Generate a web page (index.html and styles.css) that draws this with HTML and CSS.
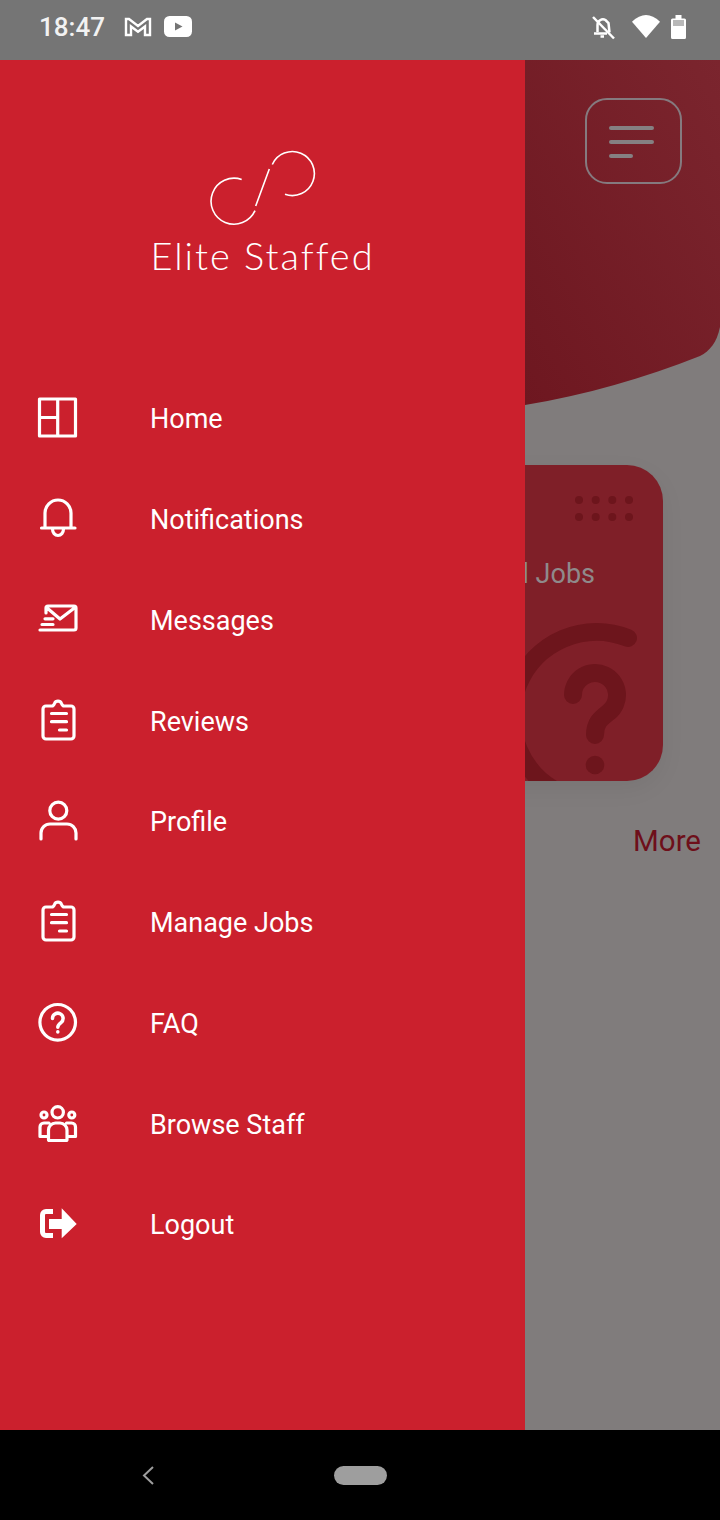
FILE: index.html
```html
<!DOCTYPE html>
<html lang="en">
<head>
    <meta charset="UTF-8">
    <meta name="viewport" content="width=device-width, initial-scale=1.0">
    <title>Elite Staffed</title>
    <link rel="stylesheet" href="styles.css">
</head>
<body>
    <div class="screen">
        <div class="status-bar">
            <span class="clock">18:47</span>
            <svg class="st-gmail" viewBox="0 0 28 20"><path d="M2 2h3l9 7 9-7h3v16h-5V9.500l-7 5.200-7-5.200V18H2z"/></svg>
            <svg class="st-youtube" viewBox="0 0 28 21"><rect width="28" height="21" rx="5.500" fill="#fff"/><path d="M11 6.500l7.500 4-7.500 4z" fill="#757575"/></svg>
            <div class="status-right">
                <svg class="st-bell" viewBox="0 0 24 26"><path d="M6.500 18V11a5.500 5.500 0 0 1 8-5l3 3 1 9.500M3 19.500H16M9.500 22.500h3.500" fill="none" stroke="#fff" stroke-width="2.500"/><path d="M2 3L23 24.500" stroke="#fff" stroke-width="2.500"/></svg>
                <svg class="st-wifi" viewBox="0 0 28 24"><path d="M0 6.700Q14-6.700 28 6.700L14 23z" fill="#fff"/></svg>
                <svg class="st-battery" viewBox="0 0 15 24"><path d="M4.500 0h6v3.500h3a1.500 1.500 0 0 1 1.500 1.500v17.500a1.500 1.500 0 0 1-1.500 1.500h-12a1.500 1.500 0 0 1-1.500-1.500V5a1.500 1.500 0 0 1 1.500-1.500h3z" fill="#fff"/><rect x="2" y="5" width="11" height="6" fill="#b8b8b8"/></svg>
            </div>
        </div>

        <div class="main">
            <nav class="drawer">
                <div class="brand">
                    <svg class="brand-mark" viewBox="0 0 110 80">
                        <path d="M33.700 31.500A23 23 0 1 0 47 62.700M47.700 58L61.300 21M64.300 16.500A22 22 0 1 1 77 46.300"/>
                    </svg>
                    <div class="brand-name">Elite Staffed</div>
                </div>

                <a class="menu-item">
                    <svg class="menu-icon" viewBox="0 0 40 40"><path d="M1.500 1h36v37h-36zM19.700 1v37M1.500 19.500h18.200"/></svg>
                    <span>Home</span>
                </a>
                <a class="menu-item">
                    <svg class="menu-icon" viewBox="0 0 40 40"><path d="M7 29V14a13 13 0 0 1 26 0v15M3.500 29H37M14.500 30a5.500 6.500 0 0 0 11 0"/></svg>
                    <span>Notifications</span>
                </a>
                <a class="menu-item">
                    <svg class="menu-icon" viewBox="0 0 40 40"><path d="M8 13V8a2 2 0 0 1 2-2h26a2 2 0 0 1 2 2v20a2 2 0 0 1-2 2H2M8.500 7.500L22 19 37 7.500M7 18.800h8M4 24.500h11"/></svg>
                    <span>Messages</span>
                </a>
                <a class="menu-item">
                    <svg class="menu-icon" viewBox="0 0 40 40"><use href="#clipboard"/></svg>
                    <span>Reviews</span>
                </a>
                <a class="menu-item">
                    <svg class="menu-icon" viewBox="0 0 40 40"><circle cx="20.300" cy="9.700" r="8.500"/><path d="M3 38v-6a9 9 0 0 1 9-9h17a9 9 0 0 1 9 9v6"/></svg>
                    <span>Profile</span>
                </a>
                <a class="menu-item">
                    <svg class="menu-icon" viewBox="0 0 40 40"><use href="#clipboard"/></svg>
                    <span>Manage Jobs</span>
                </a>
                <a class="menu-item">
                    <svg class="menu-icon" viewBox="0 0 40 40"><circle cx="19.700" cy="19.300" r="17.800"/><path class="faq-mark" d="M14.500 15.500a5.300 5.300 0 1 1 8.500 4.200c-2 1.500-3.200 2.500-3.200 4.500M19.800 28.700v.3"/></svg>
                    <span>FAQ</span>
                </a>
                <a class="menu-item">
                    <svg class="menu-icon" viewBox="0 0 40 40"><circle cx="19.700" cy="8.300" r="5.700"/><circle cx="6" cy="11" r="3"/><circle cx="33.800" cy="11" r="3"/><path d="M10.500 35.500V26a7 7 0 0 1 7-7h4.500a7 7 0 0 1 7 7v9.500a1 1 0 0 1-1 1H11.500a1 1 0 0 1-1-1zM10.500 32.500H2V23a4 4 0 0 1 4-4h5M29 32.500h8.500V23a4 4 0 0 0-4-4h-5"/></svg>
                    <span>Browse Staff</span>
                </a>
                <a class="menu-item">
                    <svg class="menu-icon" viewBox="0 0 40 40"><path class="solid" d="M11 15h12.700V4.300L38.700 20 23.700 34.300V25H11z"/><path class="thick" d="M15 7.500H8a3.500 3.500 0 0 0-3.500 3.500v17A3.500 3.500 0 0 0 8 31.500h7"/></svg>
                    <span>Logout</span>
                </a>
            </nav>

            <div class="backdrop">
                <div class="hero">
                    <svg class="hero-shape" viewBox="0 0 195 345">
                        <defs>
                            <linearGradient id="heroFill" x1="0" y1="1" x2="1" y2="0">
                                <stop offset="0" stop-color="#6e1720"/>
                                <stop offset="1" stop-color="#7b252e"/>
                            </linearGradient>
                        </defs>
                        <path d="M0 0H195V267C192 282 185 291 175 296C120 318 60 335 0 345Z" fill="url(#heroFill)"/>
                    </svg>
                    <div class="menu-btn">
                        <i></i>
                        <i></i>
                        <i class="short"></i>
                    </div>
                </div>

                <div class="card">
                    <svg class="card-art" viewBox="0 0 338 316">
                        <g fill="#6d151c">
                            <circle cx="254" cy="35" r="4"/><circle cx="270.700" cy="35" r="4"/><circle cx="287.300" cy="35" r="4"/><circle cx="304" cy="35" r="4"/>
                            <circle cx="254" cy="52" r="4"/><circle cx="270.700" cy="52" r="4"/><circle cx="287.300" cy="52" r="4"/><circle cx="304" cy="52" r="4"/>
                            <circle cx="270" cy="300" r="9.300"/>
                        </g>
                        <path d="M303 173A84 84 0 1 0 240 330M248 230a22 22 0 1 1 36 17c-9 7-14 11-14 23" fill="none" stroke="#6d151c" stroke-width="18" stroke-linecap="round"/>
                    </svg>
                    <div class="card-label">Total Jobs</div>
                </div>

                <div class="more">More</div>
            </div>
        </div>

        <div class="nav-bar">
            <svg class="nav-back" viewBox="0 0 12 19"><path d="M11 1L2 9.500l9 8.500" fill="none" stroke="#9e9e9e" stroke-width="2"/></svg>
            <div class="nav-home"></div>
        </div>
    </div>

    <svg class="defs" width="0" height="0">
        <symbol id="clipboard" viewBox="0 0 40 40" overflow="visible">
            <path d="M8 5h6.500c1-.5 1.500-1 2-2.500a3.800 3.800 0 0 1 7 0c.5 1.500 1 2 2 2.500H33a3 3 0 0 1 3 3v27a3 3 0 0 1-3 3H8a3 3 0 0 1-3-3V8a3 3 0 0 1 3-3zM13.500 12.500H28.500M13.500 20.700H28.500M21.500 29H28.500" fill="none" stroke="#fff" stroke-width="3.200" stroke-linecap="round"/>
        </symbol>
    </svg>
</body>
</html>
```

FILE: styles.css
```css
/* Reset margin and padding */
* {
    margin: 0;
    padding: 0;
    box-sizing: border-box;
}

body {
    font-family: 'Roboto', 'Liberation Sans', sans-serif;
    background-color: #000;
}

.screen {
    width: 720px;
    height: 1520px;
    display: flex;
    flex-direction: column;
    overflow: hidden;
}

.defs {
    position: absolute;
}

/* Status bar */
.status-bar {
    height: 60px;
    flex-shrink: 0;
    display: flex;
    align-items: center;
    padding: 0 34px 7px 39px;
    background-color: #757575;
    color: #f2f2f2;
}

.clock {
    font-size: 26px;
    font-weight: 500;
    width: 65px;
}

.st-gmail {
    width: 28px;
    height: 20px;
    margin-left: 20px;
}

.st-gmail path {
    fill: none;
    stroke: #fff;
    stroke-width: 2.400;
}

.st-youtube {
    width: 28px;
    height: 21px;
    margin-left: 12px;
}

.status-right {
    margin-left: auto;
    display: flex;
    align-items: center;
}

.st-bell {
    width: 24px;
    height: 26px;
}

.st-wifi {
    width: 28px;
    height: 24px;
    margin-left: 17px;
}

.st-battery {
    width: 15px;
    height: 24px;
    margin-left: 11px;
}

/* Main area holds the drawer and the dimmed page behind it */
.main {
    flex: 1;
    display: flex;
    min-height: 0;
}

.drawer {
    width: 525px;
    flex-shrink: 0;
    position: relative;
    z-index: 2;
    background-color: #cb202d;
    color: #fff;
}

.brand {
    height: 308px;
    display: flex;
    flex-direction: column;
    align-items: center;
    padding-top: 88px;
}

.brand-mark {
    width: 110px;
    height: 80px;
}

.brand-mark path {
    fill: none;
    stroke: #fff;
    stroke-width: 1.600;
}

.brand-name {
    font-family: 'Lato', sans-serif;
    font-size: 38px;
    font-weight: 300;
    letter-spacing: 2px;
    line-height: 44px;
    margin-top: 5px;
}

.menu-item {
    height: 100.750px;
    display: flex;
    align-items: center;
    padding-left: 38px;
    font-size: 27px;
}

.menu-item span {
    margin-left: 72px;
    margin-top: 2px;
}

.menu-icon {
    width: 40px;
    height: 40px;
    overflow: visible;
    fill: none;
    stroke: #fff;
    stroke-width: 3.200;
    stroke-linecap: round;
    stroke-linejoin: round;
}

.menu-icon .solid {
    fill: #fff;
    stroke: none;
}

.menu-icon .thick {
    stroke-width: 5px;
    stroke-linecap: butt;
}

.menu-icon .faq-mark {
    stroke-width: 3.500px;
}

/* Dimmed page behind the drawer */
.backdrop {
    flex: 1;
    min-width: 0;
    background-color: #807c7c;
}

.hero {
    position: relative;
    height: 345px;
}

.hero-shape {
    display: block;
    width: 195px;
    height: 345px;
}

.menu-btn {
    position: absolute;
    left: 60px;
    top: 38px;
    width: 97px;
    height: 86px;
    border: 2px solid #857a7f;
    border-radius: 22px;
    padding-top: 26px;
    padding-left: 22px;
}

.menu-btn i {
    display: block;
    width: 45px;
    height: 4px;
    margin-bottom: 10px;
    background-color: #858082;
    border-radius: 2px;
}

.menu-btn .short {
    width: 24px;
}

.card {
    position: relative;
    width: 338px;
    height: 316px;
    margin-top: 60px;
    margin-left: -200px;
    border-radius: 36px;
    background-color: #7f1f28;
    box-shadow: 0 8px 24px rgba(0, 0, 0, 0.06);
    overflow: hidden;
}

.card-art {
    position: absolute;
    left: 0;
    top: 0;
    width: 338px;
    height: 316px;
}

.card-label {
    position: relative;
    padding-top: 91px;
    padding-right: 68px;
    text-align: right;
    font-size: 27px;
    line-height: 36px;
    color: #8f8a8b;
}

.more {
    margin-top: 42px;
    padding-right: 19px;
    text-align: right;
    font-size: 29.500px;
    line-height: 36px;
    color: #6e0f1a;
}

/* Navigation bar */
.nav-bar {
    height: 90px;
    flex-shrink: 0;
    display: flex;
    align-items: center;
    padding-left: 142px;
    background-color: #000;
}

.nav-back {
    width: 12px;
    height: 19px;
}

.nav-home {
    width: 53px;
    height: 19px;
    margin-left: 180px;
    border-radius: 10px;
    background-color: #9e9e9e;
}
```
